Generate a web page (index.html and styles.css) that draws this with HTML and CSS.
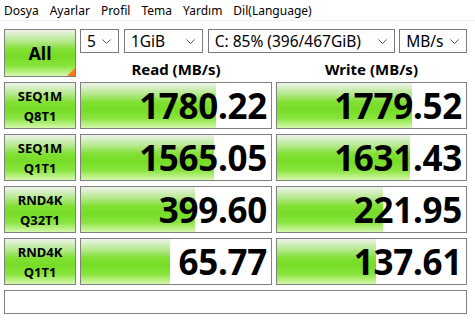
FILE: index.html
```html
<!DOCTYPE html>
<html lang="tr">
  <head>
    <meta charset="UTF-8">
    <title>CrystalDiskMark</title>
    <link rel="stylesheet" href="styles.css">
  </head>
  <body>
    <div class="menu">
      <span>Dosya</span>
      <span>Ayarlar</span>
      <span>Profil</span>
      <span>Tema</span>
      <span>Yardım</span>
      <span>Dil(Language)</span>
    </div>

    <div class="main">
      <div class="all btn">All</div>
      <div class="top">
        <div class="combos">
          <div class="combo w-count">5<svg viewBox="0 0 9 5"><polyline points="0.5,0.5 4.5,4.5 8.5,0.5"/></svg></div>
          <div class="combo w-size">1GiB<svg viewBox="0 0 9 5"><polyline points="0.5,0.5 4.5,4.5 8.5,0.5"/></svg></div>
          <div class="combo w-drive">C: 85% (396/467GiB)<svg viewBox="0 0 9 5"><polyline points="0.5,0.5 4.5,4.5 8.5,0.5"/></svg></div>
          <div class="combo w-unit">MB/s<svg viewBox="0 0 9 5"><polyline points="0.5,0.5 4.5,4.5 8.5,0.5"/></svg></div>
        </div>
        <div class="heads">
          <div class="head">Read (MB/s)</div>
          <div class="head">Write (MB/s)</div>
        </div>
      </div>

      <div class="label btn">SEQ1M<br>Q8T1</div>
      <div class="cell" style="background-size: 135px 100%">1780.22</div>
      <div class="cell" style="background-size: 135px 100%">1779.52</div>

      <div class="label btn">SEQ1M<br>Q1T1</div>
      <div class="cell" style="background-size: 133px 100%">1565.05</div>
      <div class="cell" style="background-size: 133px 100%">1631.43</div>

      <div class="label btn">RND4K<br>Q32T1</div>
      <div class="cell" style="background-size: 114px 100%">399.60</div>
      <div class="cell" style="background-size: 106px 100%">221.95</div>

      <div class="label btn">RND4K<br>Q1T1</div>
      <div class="cell" style="background-size: 89px 100%">65.77</div>
      <div class="cell" style="background-size: 99px 100%">137.61</div>

      <div class="comment"></div>
    </div>
  </body>
</html>
```

FILE: styles.css
```css
body {
  margin: 0;
  background-color: #fff;
  font-family: "Noto Sans", "Open Sans", sans-serif;
  color: #000;
}

.menu {
  display: flex;
  gap: 11px;
  height: 20px;
  padding-left: 4px;
  font-size: 12px;
  line-height: 21px;
  border-bottom: 1px solid #f0f0f0;
}

.main {
  display: grid;
  grid-template-columns: 72px 192px 191px;
  grid-template-rows: 48px repeat(4, 47px) 24px;
  column-gap: 4px;
  row-gap: 5px;
  padding: 8px 0 0 4px;
}

.btn {
  box-sizing: border-box;
  border: 1px solid #808080;
  background: linear-gradient(to bottom, #eef3ea 0%, #b6e98e 24%, #82e034 42%, #76dc26 58%, #88e43c 78%, #d6f8ae 100%);
  display: flex;
  align-items: center;
  justify-content: center;
  text-align: center;
  font-weight: bold;
}

.all {
  position: relative;
  font-size: 18px;
}

.all::after {
  content: "";
  position: absolute;
  right: 0;
  bottom: 0;
  border-style: solid;
  border-width: 0 0 8px 8px;
  border-color: transparent transparent #ff7a10 transparent;
}

.top {
  grid-column: 2 / 4;
  display: flex;
  flex-direction: column;
}

.combos {
  display: flex;
  gap: 5px;
  height: 24px;
}

.combo {
  box-sizing: border-box;
  display: flex;
  align-items: center;
  justify-content: space-between;
  padding: 0 7px 0 6px;
  border: 1px solid #7a7a7a;
  background-color: #fff;
  font-size: 15.5px;
  white-space: nowrap;
}

.combo svg {
  width: 9px;
  height: 5px;
  fill: none;
  stroke: #555;
  stroke-width: 1;
}

.w-count { width: 39px; }
.w-size { width: 79px; }
.w-drive { width: 188px; margin-right: -1px; }
.w-unit { width: 68px; }

.heads {
  display: grid;
  grid-template-columns: 192px 191px;
  column-gap: 4px;
  flex: 1;
}

.head {
  font-size: 15px;
  font-weight: bold;
  text-align: center;
  line-height: 32px;
}

.label {
  flex-direction: column;
  font-size: 13px;
  line-height: 20px;
}

.cell {
  box-sizing: border-box;
  border: 1px solid #808080;
  background-color: #fff;
  background-image: linear-gradient(to bottom, #eef3ea 0%, #b6e98e 24%, #82e034 42%, #76dc26 58%, #88e43c 78%, #d6f8ae 100%);
  background-repeat: no-repeat;
  text-align: right;
  padding-right: 4px;
  font-size: 35px;
  font-weight: bold;
  line-height: 46px;
  letter-spacing: -0.3px;
}

.comment {
  grid-column: 1 / 4;
  border: 1px solid #808080;
  background-color: #fff;
}
```
